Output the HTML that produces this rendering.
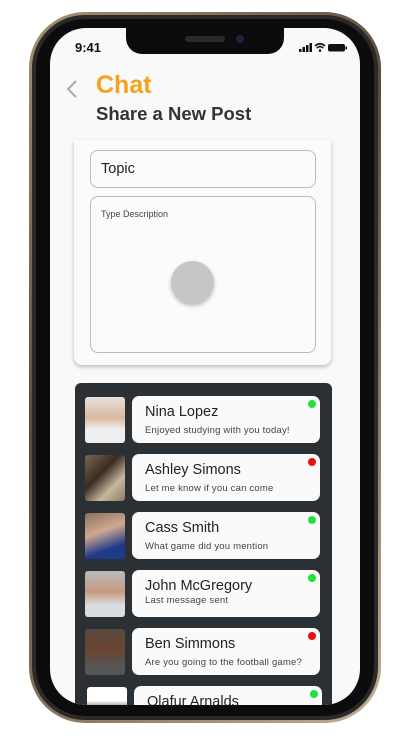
<!DOCTYPE html>
<html><head><meta charset="utf-8"><style>
*{margin:0;padding:0;box-sizing:border-box}
body{width:408px;height:740px;background:#fff;position:relative;overflow:hidden;font-family:"Liberation Sans",sans-serif}
.gold{position:absolute;left:29px;top:12px;width:352px;height:711px;border-radius:56px;background:linear-gradient(135deg,#a89072,#5a4a3a 40%,#8c7760 70%,#c4ad90);}
.black{position:absolute;left:32px;top:15px;width:346px;height:705px;border-radius:53px;background:#2a2a2a;}
.black2{position:absolute;left:36px;top:19px;width:338px;height:697px;border-radius:49px;background:#0c0c0c;}
.screen{position:absolute;left:50px;top:28px;width:310px;height:677px;border-radius:36px;background:#f9f9f9;overflow:hidden}
.notch{position:absolute;left:76px;top:0;width:158px;height:26px;background:#0c0c0c;border-radius:0 0 16px 16px}
.spk{position:absolute;left:59px;top:8px;width:40px;height:6px;border-radius:3px;background:#2a2a2a}
.cam{position:absolute;left:110px;top:7px;width:8px;height:8px;border-radius:50%;background:#1b2540}
.t{position:absolute;left:25px;top:12px;font-size:13px;font-weight:bold;color:#111}
.abs{position:absolute}
.card{position:absolute;left:24px;top:112px;width:257px;height:225px;background:#fbfbfb;border-radius:0 0 8px 8px;box-shadow:0 2px 4px rgba(0,0,0,.25)}
.inp{position:absolute;border:1px solid #bbb;border-radius:8px;background:#fbfbfb}
.list{position:absolute;left:25px;top:355px;width:257px;height:340px;background:#2b3034;border-radius:6px}
.row{position:absolute;left:10px;width:235px;height:47px}
.av{position:absolute;left:0;top:1px;width:40px;height:46px;border-radius:3px}
.mc{position:absolute;left:47px;top:0;width:188px;height:47px;background:#fafafa;border-radius:7px}
.nm{position:absolute;left:13px;top:8px;font-size:14.5px;color:#222}
.ms{position:absolute;left:13px;top:29px;font-size:9.5px;color:#444;letter-spacing:.2px}
.dot{position:absolute;right:4px;top:4px;width:8px;height:8px;border-radius:50%}
.g{background:#1ee33a}.r{background:#e81010}
</style></head><body>
<div class="gold"></div><div class="black"></div><div class="black2"></div>
<div class="screen">
<div class="notch"><div class="spk"></div><div class="cam"></div></div>
<div class="t">9:41</div>
<svg class="abs" style="left:249px;top:14px" width="50" height="11" viewBox="0 0 50 11">
<rect x="0" y="7" width="2.5" height="3" fill="#111"/><rect x="3.5" y="5" width="2.5" height="5" fill="#111"/><rect x="7" y="3" width="2.5" height="7" fill="#111"/><rect x="10.5" y="1" width="2.5" height="9" fill="#111"/>
<path d="M16 4 Q21 -0.5 26 4 M17.8 6 Q21 3 24.2 6" stroke="#111" stroke-width="1.6" fill="none"/><circle cx="21" cy="8.5" r="1.3" fill="#111"/>
<rect x="29" y="2" width="17" height="7.5" rx="2" fill="#111"/><rect x="46.5" y="4.5" width="1.5" height="3" fill="#111"/>
</svg>
<svg class="abs" style="left:16px;top:52px" width="12" height="18" viewBox="0 0 12 18"><path d="M10 1 L2 9 L10 17" stroke="#aaa" stroke-width="2" fill="none"/></svg>
<div class="abs" style="left:46px;top:43px;font-size:25px;font-weight:bold;color:#f5a21c">Chat</div>
<div class="abs" style="left:46px;top:75px;font-size:18.5px;font-weight:bold;color:#333">Share a New Post</div>
<div class="card">
<div class="inp" style="left:16px;top:10px;width:226px;height:38px"><span class="abs" style="left:10px;top:10px;font-size:14.5px;color:#222">Topic</span></div>
<div class="inp" style="left:16px;top:56px;width:226px;height:157px"><span class="abs" style="left:10px;top:12px;font-size:9px;color:#444">Type Description</span>
<div class="abs" style="left:80px;top:64px;width:43px;height:43px;border-radius:50%;background:#c6c6c6;box-shadow:0 2px 4px rgba(0,0,0,.25)"></div></div>
</div>
<div class="list">
<div class="row" style="top:13px"><div class="av" style="background:linear-gradient(#e6e2de,#d9b9a0 45%,#eee 70%)"></div><div class="mc"><div class="nm">Nina Lopez</div><div class="ms">Enjoyed studying with you today!</div><div class="dot g"></div></div></div>
<div class="row" style="top:71px"><div class="av" style="background:linear-gradient(135deg,#7a6a50,#3a2a20 40%,#c8b8a0 70%,#8a7a60)"></div><div class="mc"><div class="nm">Ashley Simons</div><div class="ms">Let me know if you can come</div><div class="dot r"></div></div></div>
<div class="row" style="top:129px"><div class="av" style="background:linear-gradient(160deg,#8a7060,#d0a890 40%,#1e3a8a 75%)"></div><div class="mc"><div class="nm">Cass Smith</div><div class="ms">What game did you mention</div><div class="dot g"></div></div></div>
<div class="row" style="top:187px"><div class="av" style="background:linear-gradient(#bbb,#c79a80 45%,#d8dde2 75%)"></div><div class="mc"><div class="nm">John McGregory</div><div class="ms" style="top:25px">Last message sent</div><div class="dot g"></div></div></div>
<div class="row" style="top:245px"><div class="av" style="background:linear-gradient(#5a4a40,#6a4430 45%,#555 80%)"></div><div class="mc"><div class="nm">Ben Simmons</div><div class="ms">Are you going to the football game?</div><div class="dot r"></div></div></div>
<div class="row" style="top:303px"><div class="av" style="left:2px;background:linear-gradient(#fff 30%,#6a4a3a 50%,#c9a080)"></div><div class="mc" style="left:49px"><div class="nm">Olafur Arnalds</div><div class="dot g"></div></div></div>
</div>
</div>
</body></html>
